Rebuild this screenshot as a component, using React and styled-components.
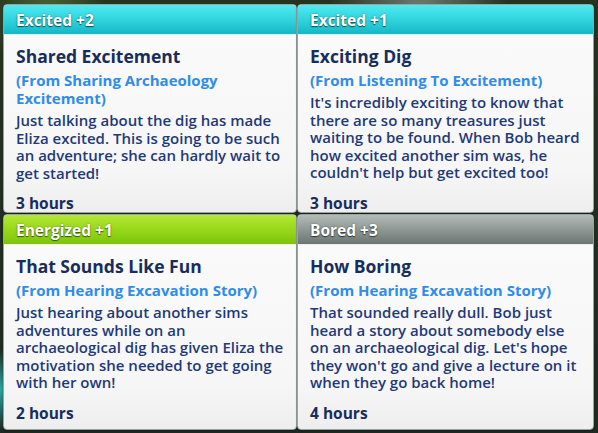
import React from 'react';
import styled, { createGlobalStyle, css } from 'styled-components';

const GlobalStyle = createGlobalStyle`
    html, body {
        margin: 0;
        padding: 0;
    }
    body {
        width: 598px;
        height: 433px;
        overflow: hidden;
        background: #2d3a2a;
        font-family: "Open Sans", "Noto Sans", "DejaVu Sans", sans-serif;
    }
`;

const moods = {
    excited: css`
        background: linear-gradient(to bottom, #50eaf0 0%, #34d6e0 45%, #14b8c6 100%);
    `,
    energized: css`
        background: linear-gradient(to bottom, #b4e836 0%, #9ada1c 45%, #7ec40c 100%);
    `,
    bored: css`
        background: linear-gradient(to bottom, #b4bcb9 0%, #929b98 45%, #6b7572 100%);
    `,
};

const Scene = styled.div`
    width: 598px;
    height: 433px;
    box-sizing: border-box;
    padding: 4px 0 0 3px;
    display: grid;
    grid-template-columns: 294px 297px;
    grid-template-rows: 209px 216px;
    row-gap: 1px;
    background:
        radial-gradient(circle at 8% 4%, #4d6a3a 0, transparent 60px),
        radial-gradient(circle at 70% 2%, #6f7a72 0, transparent 90px),
        radial-gradient(circle at 0% 90%, #2aa6a2 0, transparent 40px),
        linear-gradient(to bottom, #27331f, #1e2a22);
`;

const Card = styled.div`
    display: flex;
    flex-direction: column;
    overflow: hidden;
    border-radius: 4px;
    border: 1px solid #9aa2a2;
    box-sizing: border-box;
    background: linear-gradient(to bottom, #fbfbfb 0%, #f6f6f6 80%, #eeeeee 100%);
    box-shadow: 0 1px 2px rgba(0, 0, 0, 0.35);
`;

const Header = styled.div`
    height: 29px;
    flex: none;
    display: flex;
    align-items: center;
    padding: 0 12px;
    border-bottom: 1px solid rgba(255, 255, 255, 0.75);
    ${({ $mood }) => moods[$mood]};
`;

const MoodLabel = styled.span`
    font-size: 15.5px;
    font-weight: 700;
    color: #ffffff;
    text-shadow: 0 1px 1px rgba(0, 0, 0, 0.55), 0 0 2px rgba(0, 0, 0, 0.35);
`;

const Body = styled.div`
    display: flex;
    flex-direction: column;
    padding: 10px 12px 0;
`;

const Title = styled.div`
    font-size: 17.5px;
    line-height: 22px;
    font-weight: 700;
    color: #172d5c;
`;

const Source = styled.div`
    margin-top: 4px;
    font-size: 15px;
    line-height: 18px;
    font-weight: 700;
    color: #2f8ce9;
`;

const Description = styled.div`
    margin-top: 5px;
    font-size: 15px;
    line-height: 17.6px;
    font-weight: 600;
    color: #1f3a78;
`;

const Duration = styled.div`
    margin-top: 12px;
    font-size: 15.5px;
    line-height: 18px;
    font-weight: 700;
    color: #172d5c;
`;

const buffs = [
    {
        mood: 'excited',
        label: 'Excited +2',
        title: 'Shared Excitement',
        source: '(From Sharing Archaeology Excitement)',
        text: 'Just talking about the dig has made Eliza excited. This is going to be such an adventure; she can hardly wait to get started!',
        duration: '3 hours',
    },
    {
        mood: 'excited',
        label: 'Excited +1',
        title: 'Exciting Dig',
        source: '(From Listening To Excitement)',
        text: "It's incredibly exciting to know that there are so many treasures just waiting to be found. When Bob heard how excited another sim was, he couldn't help but get excited too!",
        duration: '3 hours',
    },
    {
        mood: 'energized',
        label: 'Energized +1',
        title: 'That Sounds Like Fun',
        source: '(From Hearing Excavation Story)',
        text: 'Just hearing about another sims adventures while on an archaeological dig has given Eliza the motivation she needed to get going with her own!',
        duration: '2 hours',
    },
    {
        mood: 'bored',
        label: 'Bored +3',
        title: 'How Boring',
        source: '(From Hearing Excavation Story)',
        text: "That sounded really dull. Bob just heard a story about somebody else on an archaeological dig. Let's hope they won't go and give a lecture on it when they go back home!",
        duration: '4 hours',
    },
];

const BuffCard = ({ mood, label, title, source, text, duration }) => (
    <Card>
        <Header $mood={mood}>
            <MoodLabel>{label}</MoodLabel>
        </Header>
        <Body>
            <Title>{title}</Title>
            <Source>{source}</Source>
            <Description>{text}</Description>
            <Duration>{duration}</Duration>
        </Body>
    </Card>
);

export default function App() {
    return (
        <>
            <GlobalStyle />
            <Scene>
                {buffs.map((buff) => (
                    <BuffCard key={buff.title} {...buff} />
                ))}
            </Scene>
        </>
    );
}
